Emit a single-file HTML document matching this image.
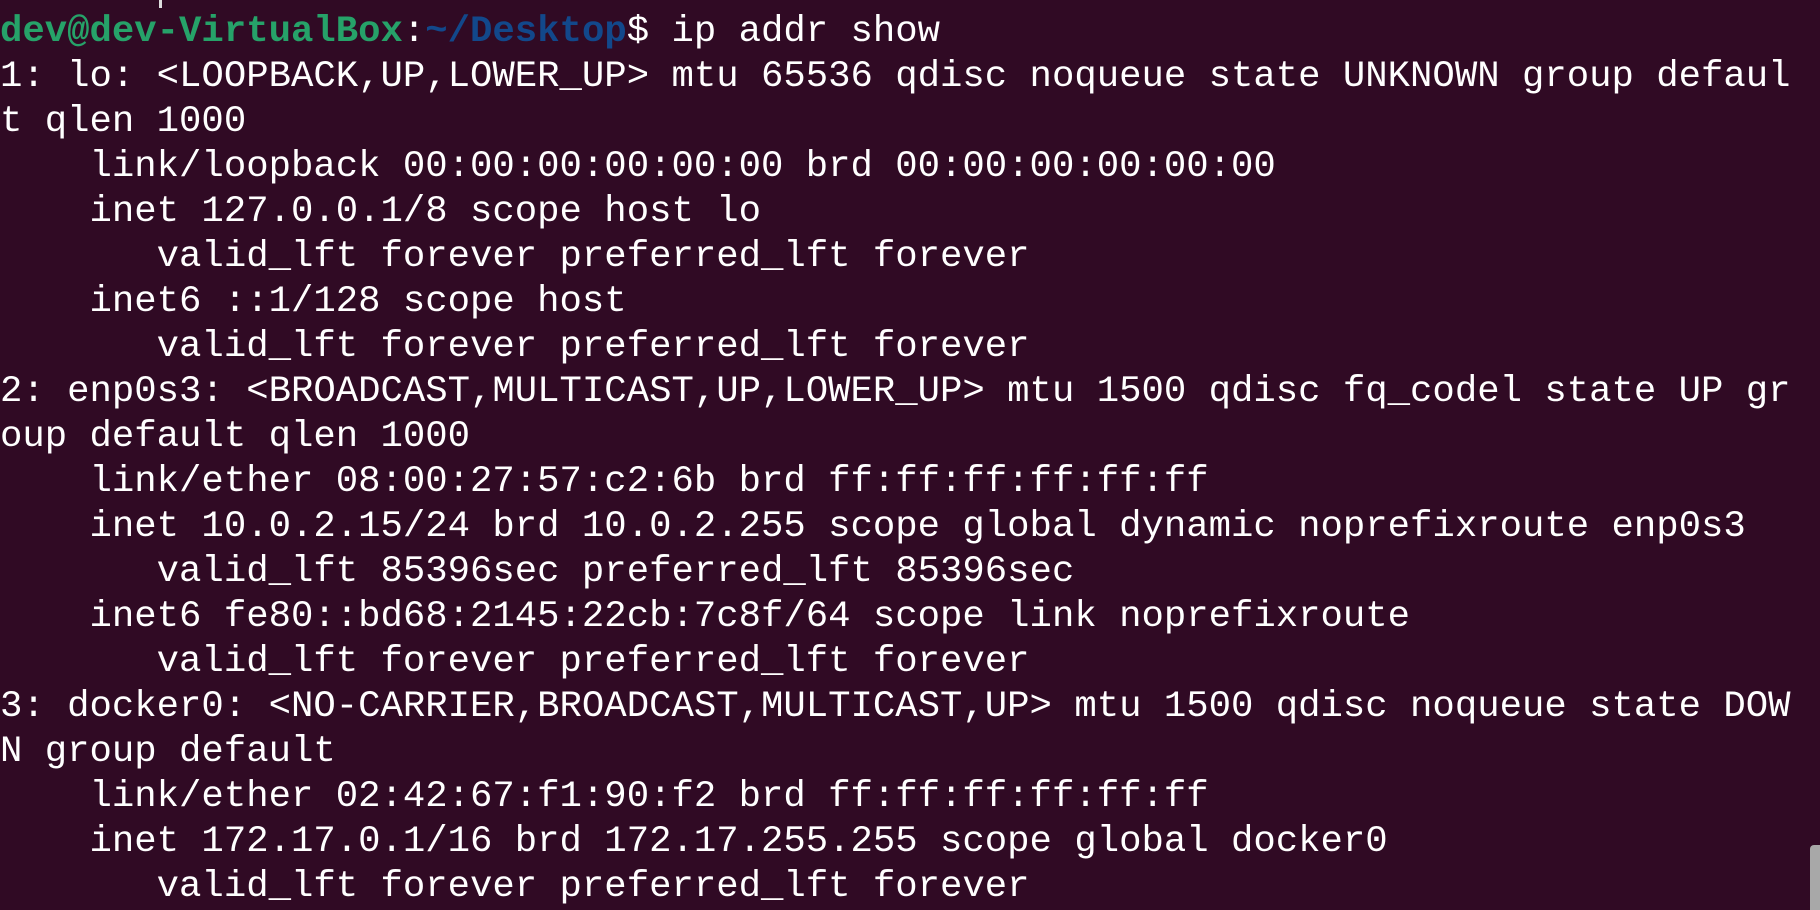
<!DOCTYPE html>
<html><head><meta charset="utf-8"><style>
html,body{margin:0;padding:0;background:#300a24;width:1820px;height:910px;overflow:hidden}
pre{position:absolute;left:0;top:10px;margin:0;font-family:"Liberation Mono",monospace;font-size:37.3px;line-height:45px;color:#fff;white-space:pre}
.g{color:#26a269;font-weight:bold}.b{color:#12488b;font-weight:bold}
.sb{position:absolute;left:1810px;top:845px;width:10px;height:65px;background:#a8a8a8;border-radius:4px 0 0 0}
.tick{position:absolute;left:159px;top:0;width:3px;height:8px;background:#ddd}
</style></head><body>
<div class="tick"></div>
<pre><span class="g">dev@dev-VirtualBox</span>:<span class="b">~/Desktop</span>$ ip addr show
1: lo: &lt;LOOPBACK,UP,LOWER_UP&gt; mtu 65536 qdisc noqueue state UNKNOWN group defaul
t qlen 1000
    link/loopback 00:00:00:00:00:00 brd 00:00:00:00:00:00
    inet 127.0.0.1/8 scope host lo
       valid_lft forever preferred_lft forever
    inet6 ::1/128 scope host
       valid_lft forever preferred_lft forever
2: enp0s3: &lt;BROADCAST,MULTICAST,UP,LOWER_UP&gt; mtu 1500 qdisc fq_codel state UP gr
oup default qlen 1000
    link/ether 08:00:27:57:c2:6b brd ff:ff:ff:ff:ff:ff
    inet 10.0.2.15/24 brd 10.0.2.255 scope global dynamic noprefixroute enp0s3
       valid_lft 85396sec preferred_lft 85396sec
    inet6 fe80::bd68:2145:22cb:7c8f/64 scope link noprefixroute
       valid_lft forever preferred_lft forever
3: docker0: &lt;NO-CARRIER,BROADCAST,MULTICAST,UP&gt; mtu 1500 qdisc noqueue state DOW
N group default
    link/ether 02:42:67:f1:90:f2 brd ff:ff:ff:ff:ff:ff
    inet 172.17.0.1/16 brd 172.17.255.255 scope global docker0
       valid_lft forever preferred_lft forever</pre>
<div class="sb"></div>
</body></html>
